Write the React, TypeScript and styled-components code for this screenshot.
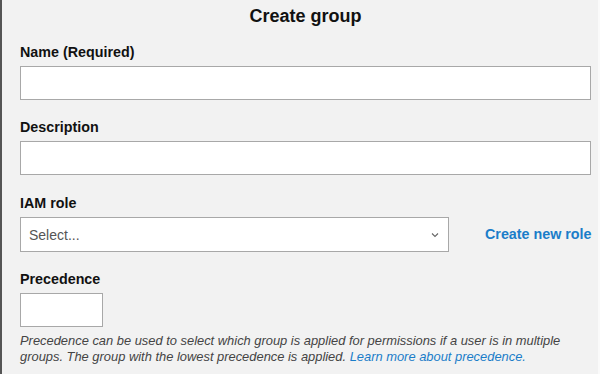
import React from 'react';
import styled, { createGlobalStyle } from 'styled-components';

const GlobalStyle = createGlobalStyle`
  html, body {
    margin: 0;
    padding: 0;
    background: #f2f2f2;
  }
`

const Page = styled.div`
  width: 600px;
  height: 374px;
  box-sizing: border-box;
  background: #f2f2f2;
  border-left: 2px solid #555;
  border-right: 2px solid #fafafa;
  font-family: "Liberation Sans", Arial, sans-serif;
  color: #111;
  padding: 0 7px 0 18px;
  overflow: hidden;
`

const Title = styled.h1`
  margin: 0;
  padding-top: 5px;
  height: 32px;
  font-size: 18px;
  font-weight: bold;
  text-align: center;
  line-height: 22px;
`

const Field = styled.div<{ gap?: number }>`
  display: flex;
  flex-direction: column;
  margin-top: ${props => props.gap ?? 0}px;
`

const Label = styled.label`
  font-size: 14.3px;
  font-weight: bold;
  line-height: 16px;
  margin-bottom: 6px;
`

const TextInput = styled.div<{ width?: number }>`
  box-sizing: border-box;
  height: 34px;
  width: ${props => (props.width ? `${props.width}px` : '100%')};
  background: #fff;
  border: 1px solid #a8a8a8;
`

const Row = styled.div`
  display: flex;
  align-items: center;
  gap: 36px;
`

const Select = styled.div`
  flex: none;
  box-sizing: border-box;
  height: 35px;
  width: 429px;
  background: #fff;
  border: 1px solid #a8a8a8;
  display: flex;
  align-items: center;
  justify-content: space-between;
  padding: 0 9px 0 8px;
  font-size: 14px;
  color: #555;
`

const Chevron = styled.svg`
  width: 8px;
  height: 6px;
`

const RoleLink = styled.a`
  color: #1a7dc9;
  font-size: 14.3px;
  font-weight: bold;
  white-space: nowrap;
  text-decoration: none;
  margin-bottom: 2px;
`

const Help = styled.p`
  margin: 6px 0 0;
  max-width: 560px;
  font-size: 12.9px;
  line-height: 16px;
  font-style: italic;
  color: #444;
`

const HelpLink = styled.a`
  color: #1a7dc9;
  text-decoration: none;
`

export default function App() {
  return (
    <Page>
      <GlobalStyle />
      <Title>Create group</Title>
      <Field gap={7}>
        <Label>Name (Required)</Label>
        <TextInput />
      </Field>
      <Field gap={19}>
        <Label>Description</Label>
        <TextInput />
      </Field>
      <Field gap={20}>
        <Label>IAM role</Label>
        <Row>
          <Select>
            <span>Select...</span>
            <Chevron viewBox="0 0 8 6">
              <path d="M1 1.5 L4 4.5 L7 1.5" fill="none" stroke="#666" strokeWidth="1.1" />
            </Chevron>
          </Select>
          <RoleLink>Create new role</RoleLink>
        </Row>
      </Field>
      <Field gap={19}>
        <Label>Precedence</Label>
        <TextInput width={83} />
      </Field>
      <Help>
        Precedence can be used to select which group is applied for permissions if a user is in multiple
        groups. The group with the lowest precedence is applied.{' '}
        <HelpLink>Learn more about precedence.</HelpLink>
      </Help>
    </Page>
  )
}
